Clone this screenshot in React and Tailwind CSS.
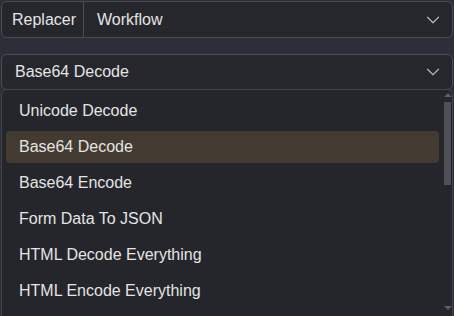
import { ChevronDown } from 'lucide-react';

const options = [
  'Unicode Decode',
  'Base64 Decode',
  'Base64 Encode',
  'Form Data To JSON',
  'HTML Decode Everything',
  'HTML Encode Everything',
];

const App = () => {
  const selected = 'Base64 Decode';

  return (
    <div className="relative w-[454px] h-[316px] overflow-hidden bg-[#2d2f38] p-px text-[16px] text-[#e4e4e4] font-['Liberation_Sans',sans-serif]">
      {/* Replacer / Workflow */}
      <div className="flex h-[37px] rounded-[6px] border border-[#4b4c51] bg-[#26272c]">
        <div className="flex w-[82px] items-center border-r border-[#4b4c51] pl-[10px]">Replacer</div>
        <div className="flex flex-1 items-center justify-between pl-[13px] pr-[8px]">
          <span>Workflow</span>
          <ChevronDown size={22} strokeWidth={1.3} className="text-[#b4b4b8]" />
        </div>
      </div>

      {/* Processor select */}
      <div className="mt-[16px] flex h-[36px] items-center justify-between rounded-[6px] border border-[#4b4c51] bg-[#26272c] pl-[13px] pr-[8px]">
        <span>{selected}</span>
        <ChevronDown size={22} strokeWidth={1.3} className="text-[#b4b4b8]" />
      </div>

      {/* Dropdown menu */}
      <div className="absolute left-px right-px top-[89px] flex h-[240px] rounded-[6px] border border-[#45464b] bg-[#25262b]">
        <div className="flex flex-1 flex-col gap-[4px] pl-[4px] pr-[5px] pt-[5px]">
          {options.map((opt) => (
            <div
              key={opt}
              className={`flex h-[32px] shrink-0 items-center rounded-[4px] pl-[13px] ${
                opt === selected ? 'bg-[#433b31]' : ''
              }`}
            >
              {opt}
            </div>
          ))}
        </div>
        <div className="relative mr-[1px] w-[7px]">
          <div className="absolute left-0 top-[3px] h-0 w-0 border-x-[4px] border-b-[4px] border-x-transparent border-b-[#5d5e63]" />
          <div className="absolute left-0 top-[12px] h-[83px] w-[7px] bg-[#4f5055]" />
          <div className="absolute left-0 top-[216px] h-0 w-0 border-x-[4px] border-t-[4px] border-x-transparent border-t-[#5d5e63]" />
        </div>
      </div>
    </div>
  );
};

export default App;
